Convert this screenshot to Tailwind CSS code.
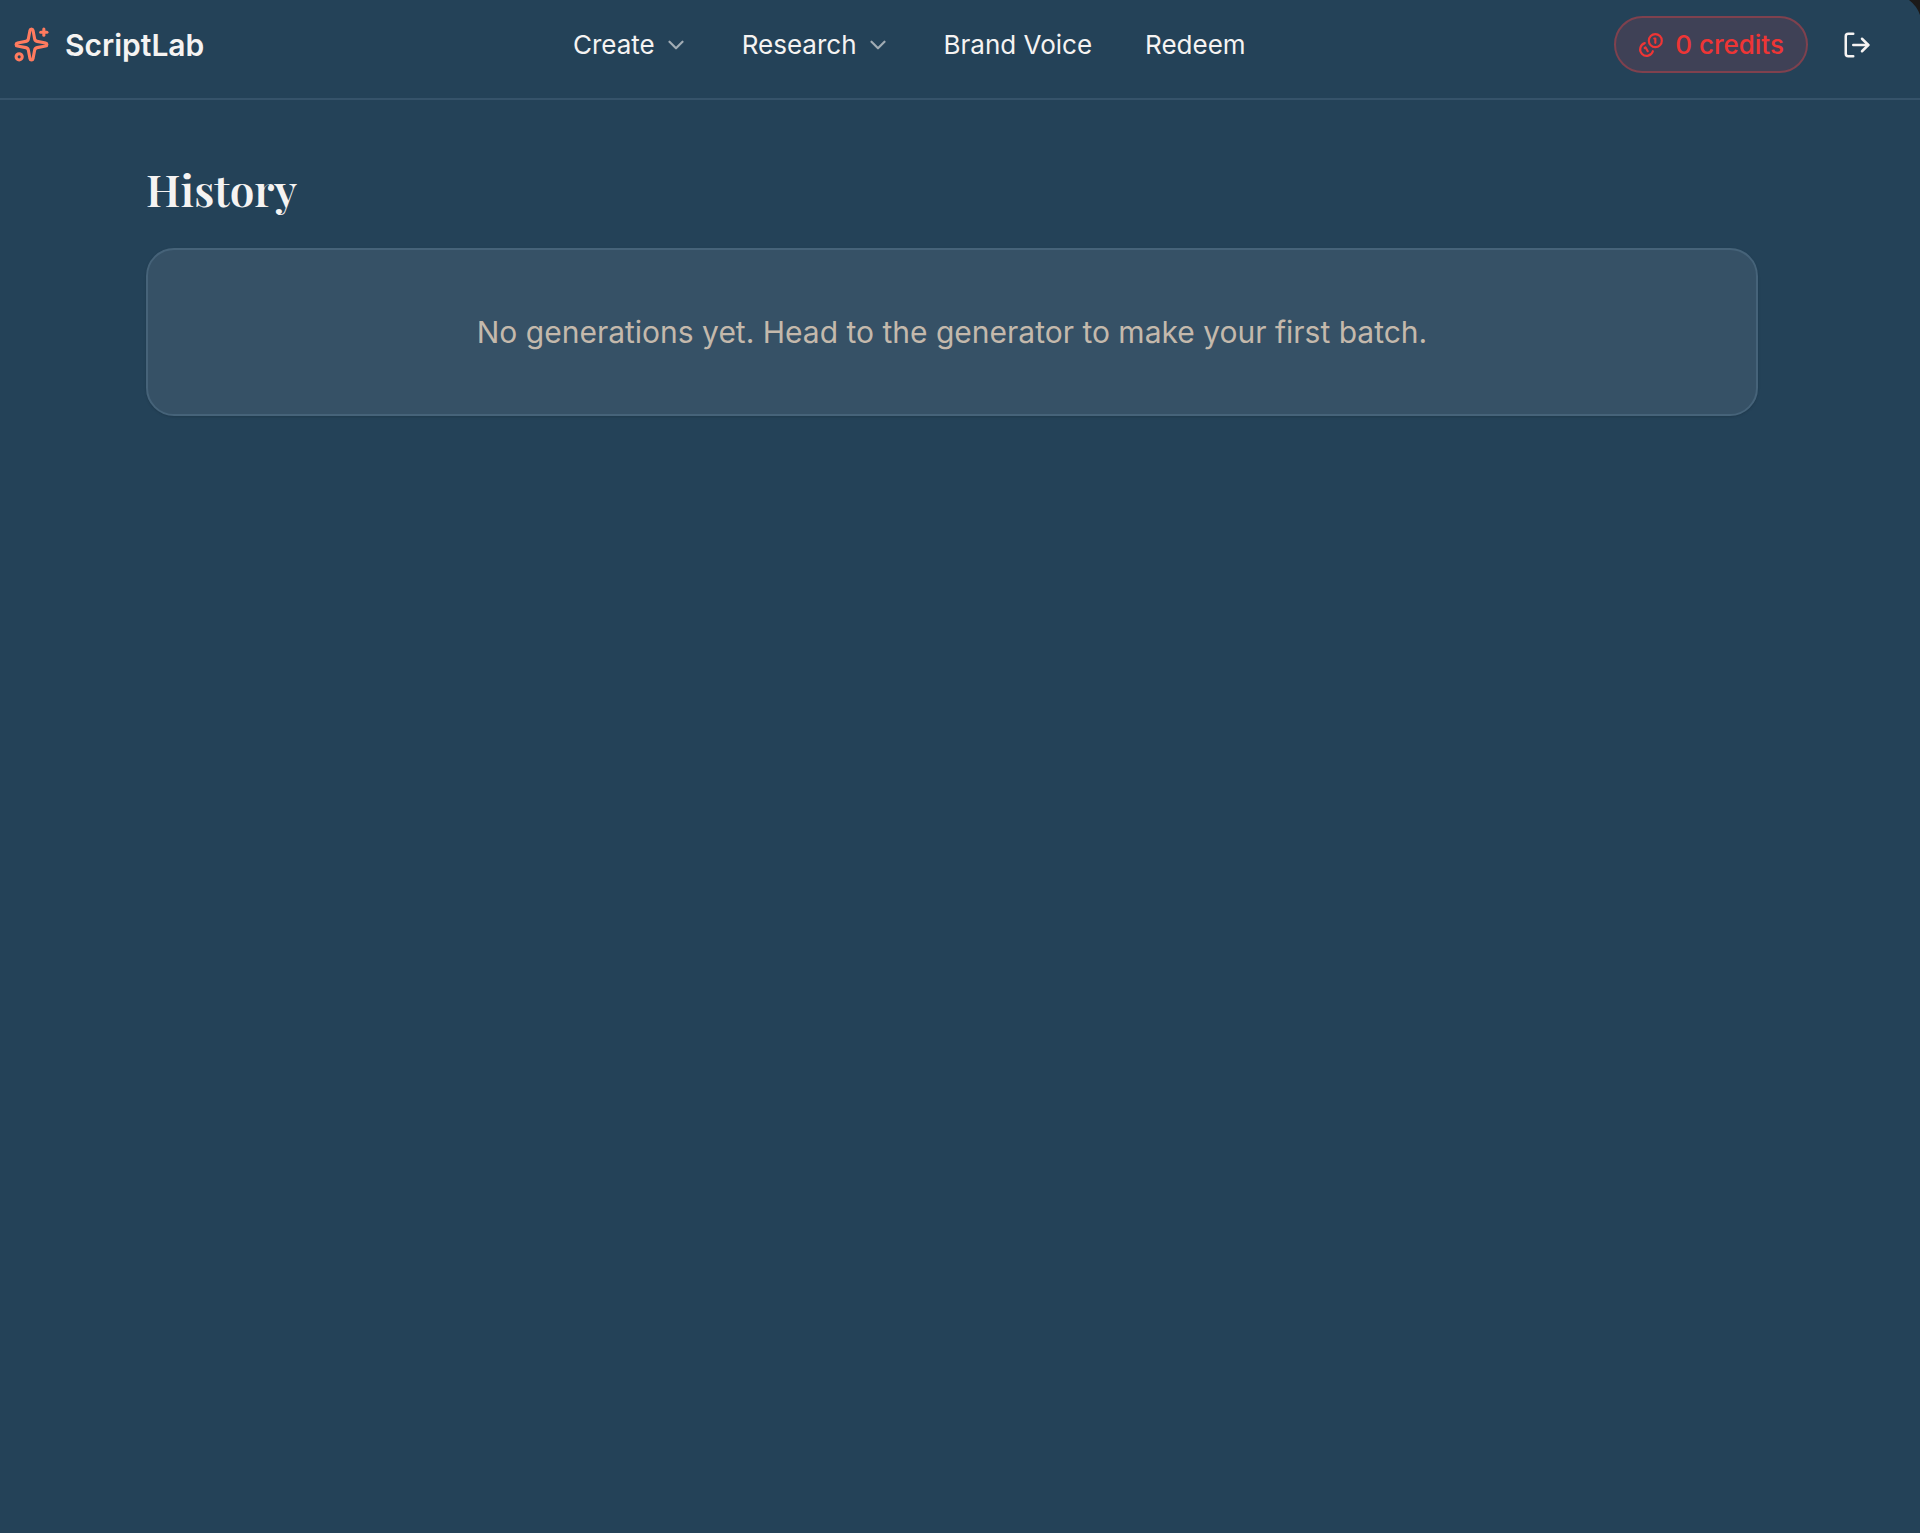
<!DOCTYPE html>
<html lang="en">
<head>
    <meta charset="UTF-8">
    <title>ScriptLab - History</title>
    <meta name="viewport" content="width=device-width, initial-scale=1.0">
    <script src="https://cdn.jsdelivr.net/npm/@tailwindcss/browser@4"></script>
</head>
<body class="relative min-h-screen bg-[#244258] text-[#f5f3f2] font-['Inter',sans-serif]">
    <!-- Rounded window corner -->
    <svg class="absolute top-0 right-0 w-4 h-4" viewBox="0 0 16 16" fill="#1c1a19" aria-hidden="true">
        <path d="M5 0Q13 6 16 15V0Z"/>
    </svg>

    <header class="flex items-center justify-between pt-4 pb-[25px] pl-[13px] pr-12 border-b-2 border-[#36536a]">
        <a href="#" class="flex items-center gap-[15px] text-[30px] leading-[38px] font-semibold">
            <svg class="size-[37px] text-[#ff7b5f]" viewBox="0 0 24 24" fill="none" stroke="currentColor" stroke-width="2" stroke-linecap="round" stroke-linejoin="round" aria-hidden="true">
                <path d="M11.017 2.814a1 1 0 0 1 1.966 0l1.051 5.558a2 2 0 0 0 1.594 1.594l5.558 1.051a1 1 0 0 1 0 1.966l-5.558 1.051a2 2 0 0 0-1.594 1.594l-1.051 5.558a1 1 0 0 1-1.966 0l-1.051-5.558a2 2 0 0 0-1.594-1.594l-5.558-1.051a1 1 0 0 1 0-1.966l5.558-1.051a2 2 0 0 0 1.594-1.594z"/>
                <path d="M20 2v4"/>
                <path d="M22 4h-4"/>
                <circle cx="4" cy="20" r="2"/>
            </svg>
            ScriptLab
        </a>

        <nav class="flex items-center gap-[53px] text-[26px] leading-10">
            <button type="button" class="flex items-center gap-2">
                Create
                <svg class="size-[26px] opacity-60" viewBox="0 0 24 24" fill="none" stroke="currentColor" stroke-width="2" stroke-linecap="round" stroke-linejoin="round" aria-hidden="true"><path d="m6 9 6 6 6-6"/></svg>
            </button>
            <button type="button" class="flex items-center gap-2">
                Research
                <svg class="size-[26px] opacity-60" viewBox="0 0 24 24" fill="none" stroke="currentColor" stroke-width="2" stroke-linecap="round" stroke-linejoin="round" aria-hidden="true"><path d="m6 9 6 6 6-6"/></svg>
            </button>
            <a href="#">Brand Voice</a>
            <a href="#">Redeem</a>
        </nav>

        <div class="flex items-center gap-[34px]">
            <a href="#" class="flex items-center gap-[11px] h-[57px] px-[22px] rounded-full border-2 border-[#7f414e] bg-[#3f4156] text-[#ef3535] text-[26px] leading-10 font-medium">
                <svg class="size-[26px]" viewBox="0 0 24 24" fill="none" stroke="currentColor" stroke-width="2" stroke-linecap="round" stroke-linejoin="round" aria-hidden="true">
                    <path d="M13.744 17.736a6 6 0 1 1-7.48-7.48"/>
                    <path d="M15 6h1v4"/>
                    <path d="m6.134 14.768.866-.5 2 3.464"/>
                    <circle cx="16" cy="8" r="6"/>
                </svg>
                0 credits
            </a>
            <button type="button" aria-label="Log out">
                <svg class="size-[30px]" viewBox="0 0 24 24" fill="none" stroke="currentColor" stroke-width="2" stroke-linecap="round" stroke-linejoin="round" aria-hidden="true">
                    <path d="m16 17 5-5-5-5"/>
                    <path d="M21 12H9"/>
                    <path d="M9 21H5a2 2 0 0 1-2-2V5a2 2 0 0 1 2-2h4"/>
                </svg>
            </button>
        </div>
    </header>

    <main class="pt-16 pl-[146px] pr-[162px]">
        <h1 class="mb-[34px] text-[44px] leading-[50px] font-semibold font-['Playfair_Display','Liberation_Serif',serif]">History</h1>
        <div class="px-8 py-[60px] rounded-[28px] border-2 border-[#466379] bg-[#365166] shadow-sm text-center text-[30px] leading-[44px] text-[#c4b9ac]">
            No generations yet. Head to the generator to make your first batch.
        </div>
    </main>
</body>
</html>
